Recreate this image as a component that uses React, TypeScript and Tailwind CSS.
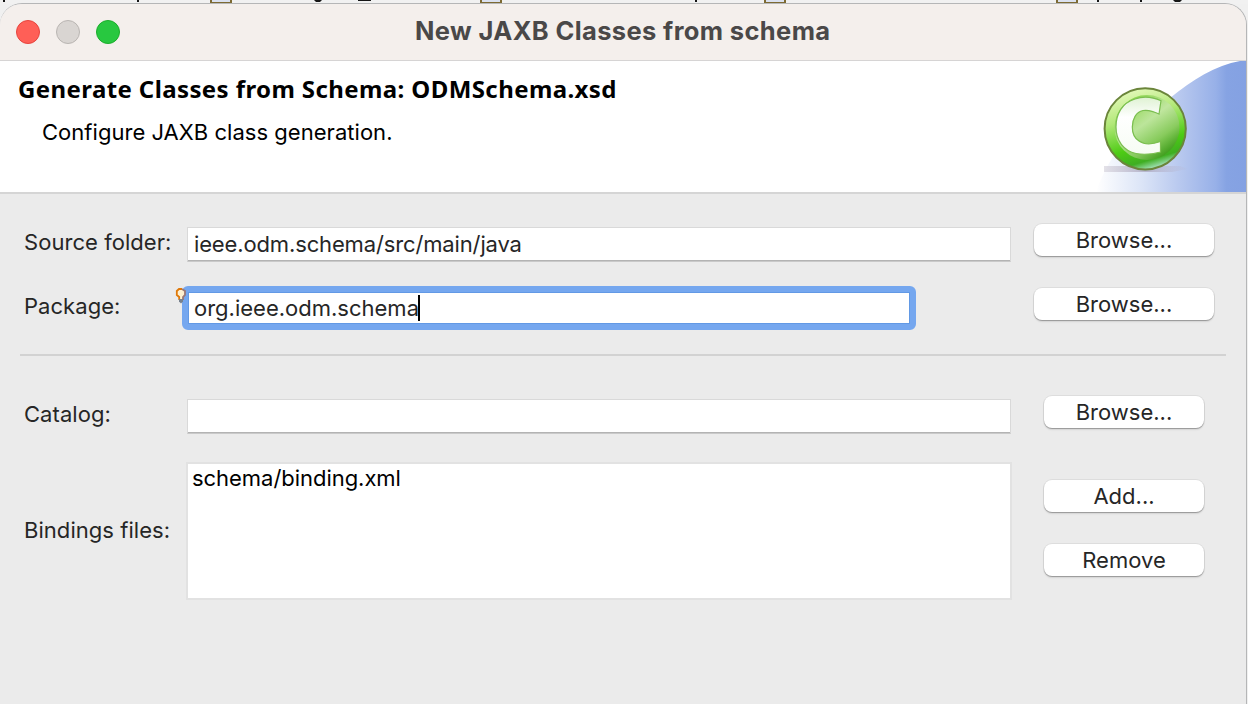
import type { ReactNode } from "react";

function DialogButton({ children, wide = false }: { children: ReactNode; wide?: boolean }) {
  return (
    <button
      className={`${wide ? "w-[180px]" : "w-[160px]"} flex h-8 shrink-0 items-center justify-center rounded-[8px] bg-white text-[22px] leading-none text-[#262626] shadow-[0_0_0_1px_rgba(0,0,0,0.06),0_1px_1px_rgba(0,0,0,0.26),0_2px_2px_rgba(0,0,0,0.08)]`}
    >
      {children}
    </button>
  );
}

function Label({ children }: { children: ReactNode }) {
  return (
    <div className="w-[163px] shrink-0 whitespace-nowrap pt-[2px] text-[22px] leading-8 tracking-[0.05px] text-[#262626]">
      {children}
    </div>
  );
}

function Field({ children }: { children?: ReactNode }) {
  return (
    <div className="flex h-[35px] w-[824px] shrink-0 items-center border border-[#d9d9d9] border-b-[#c9c9c9] bg-white pb-[2px] pl-[6px] text-[22px] leading-none text-[#262626] shadow-[inset_0_-1px_0_#b3b3b3]">
      {children}
    </div>
  );
}

function WizardBanner() {
  return (
    <svg className="h-[131px] w-[152px] shrink-0" viewBox="0 0 152 131">
      <defs>
        <linearGradient id="sweep" x1="0" x2="1" y1="0" y2="0">
          <stop offset="0" stopColor="#ffffff" />
          <stop offset="0.3" stopColor="#dce5f7" />
          <stop offset="0.58" stopColor="#b5c6ee" />
          <stop offset="0.8" stopColor="#97b0e8" />
          <stop offset="0.87" stopColor="#86a3e3" />
          <stop offset="1" stopColor="#84a1e2" />
        </linearGradient>
        <linearGradient id="ball" x1="0.3" x2="0.6" y1="0" y2="1">
          <stop offset="0" stopColor="#e6f9bd" />
          <stop offset="0.35" stopColor="#b2e878" />
          <stop offset="0.7" stopColor="#4dcb14" />
          <stop offset="0.88" stopColor="#3fae22" />
          <stop offset="1" stopColor="#b0e8cd" />
        </linearGradient>
        <linearGradient id="disc" x1="0.2" x2="0.85" y1="0.1" y2="0.95">
          <stop offset="0" stopColor="#7dcf3c" />
          <stop offset="0.4" stopColor="#c3e6a6" />
          <stop offset="0.7" stopColor="#8fca66" />
          <stop offset="1" stopColor="#2e8f0c" />
        </linearGradient>
        <linearGradient id="letter" x1="0" x2="0" y1="0" y2="1">
          <stop offset="0" stopColor="#dff2d3" />
          <stop offset="0.35" stopColor="#ffffff" />
          <stop offset="1" stopColor="#f6fcf3" />
        </linearGradient>
        <linearGradient id="shade" x1="0" x2="1" y1="0" y2="0">
          <stop offset="0" stopColor="#d8d5de" stopOpacity="0.7" />
          <stop offset="0.5" stopColor="#aaa5bd" stopOpacity="0.75" />
          <stop offset="1" stopColor="#b7b4cc" stopOpacity="0.1" />
        </linearGradient>
      </defs>
      <path d="M2 131 C16 92 42 60 76 37 C98 19 122 4 146 0 H152 V131 Z" fill="url(#sweep)" />
      <path d="M10 105 H86 L94 108 L78 111 H10 Z" fill="url(#shade)" />
      <circle cx="51.2" cy="67.8" r="40.6" fill="url(#ball)" stroke="#6b853b" strokeWidth="2" />
      <circle cx="53" cy="66.5" r="32.5" fill="url(#disc)" opacity="0.85" />
      <path
        d="M67 39.7 C59 36 49 35 41 38 C28 42 22 53 22 66 C22 80 30 90 42 92.5 C50 94 59 93 66.5 91 V80.5 C58 83.5 50 83.5 45 80 C40 77 38.3 72 38.3 66 C38.3 58 42 51 49 49.5 C55 48.5 60 50.5 65 53 Z"
        fill="url(#letter)"
        stroke="#7bbe50"
        strokeWidth="1.2"
      />
    </svg>
  );
}

function Bulb() {
  return (
    <svg className="absolute left-[-7px] top-[1px] h-[18px] w-[12px]" viewBox="0 0 12 18">
      <path d="M4 10 L1.8 8 V4 L4 2 H8 L10 4 V8 L8 10 V13 H4 Z" fill="#fff0cf" />
      <path d="M4.2 13 V10 L1.8 8 V4 L4 2 H7" fill="none" stroke="#df7809" strokeWidth="1.8" />
      <path d="M7 2 L10 4 V8 L8 10 V13" fill="none" stroke="#9b7775" strokeWidth="1.8" />
      <path d="M4 12 H8 V14.5 L6 16.5 L4 14.5 Z" fill="#77818d" />
    </svg>
  );
}

function BackgroundStrip() {
  return (
    <svg className="absolute left-0 top-0 h-[4px] w-[1248px]" viewBox="0 0 1248 4">
      <rect width="1248" height="4" fill="#f1f1f1" />
      <g fill="#dbe1ef" stroke="#7d6a33" strokeWidth="2">
        <path d="M211 -1 V3 H231 V-1" />
        <path d="M481 -1 V3 H501 V-1" />
        <path d="M765 -1 V3 H785 V-1" />
        <path d="M1057 -1 V3 H1077 V-1" />
      </g>
      <path d="M3 0h2v2H3z M137 0h2v2h-2z M314 0h8l-2 2h-4z M358 0h13v1h-13z M695 0h2v2h-2z M1097 0h2v2h-2z M1140 0h2v2h-2z M1173 0h9l-2 2h-5z" fill="#151515" />
    </svg>
  );
}

export default function App() {
  return (
    <div className="relative h-[704px] w-[1248px] overflow-hidden bg-[#f0f0f0] pt-[3px] font-['Inter',sans-serif]">
      <BackgroundStrip />
      <main className="relative flex h-[701px] w-[1247px] flex-col overflow-hidden rounded-t-[22px] border-r border-t border-[#b5b6b7] bg-[#ebebeb]">
        <header className="flex h-[57px] shrink-0 items-center border-b border-[#d6d4d4] bg-[#f4efec] pl-4">
          <div className="flex w-[399px] gap-4">
            <span className="h-6 w-6 rounded-full border border-[#e6443e] bg-[#ff5f57]" />
            <span className="h-6 w-6 rounded-full border border-[#b9b5b2] bg-[#d9d5d2]" />
            <span className="h-6 w-6 rounded-full border border-[#1cad2c] bg-[#28c840]" />
          </div>
          <h1 className="whitespace-nowrap pb-[2px] text-[25.5px] font-bold leading-8 tracking-[0.37px] text-[#4a4848]">New JAXB Classes from schema</h1>
        </header>
        <section className="flex h-[133px] shrink-0 justify-between border-b-2 border-[#d5d5d5] bg-white pl-[18px]">
          <div className="pt-[12px]">
            <h2 className="whitespace-nowrap font-['Noto_Sans',sans-serif] text-[24px] font-bold leading-8 tracking-[0.4px] text-black">Generate Classes from Schema: ODMSchema.xsd</h2>
            <p className="mt-[11px] whitespace-nowrap pl-6 text-[22px] leading-8 tracking-[0.03px] text-black">Configure JAXB class generation.</p>
          </div>
          <WizardBanner />
        </section>
        <section className="flex flex-col pl-6 pt-[30px]">
          <div className="flex h-16 items-start">
            <Label>Source folder:</Label>
            <div className="pt-[3px]"><Field><span className="tracking-[-0.14px]">ieee.odm.schema/src/main/java</span></Field></div>
            <div className="ml-[23px]"><DialogButton wide>Browse...</DialogButton></div>
          </div>
          <div className="flex h-[66px] items-start">
            <Label>Package:</Label>
            <div className="relative -ml-[5px] -mt-[2px] flex h-[44px] w-[734px] items-center rounded-[6px] border-[6px] border-[#75a7ef] bg-white pl-[6px] text-[22px] leading-none text-[#262626] shadow-[inset_0_0_0_1px_#6299e5]">
              <span>org.ieee.odm.schema</span>
              <span className="-ml-px h-[26px] w-[2px] bg-black" />
              <div className="absolute -left-[6px] -top-[6px]"><Bulb /></div>
            </div>
            <div className="ml-[118px]"><DialogButton wide>Browse...</DialogButton></div>
          </div>
          <div className="-ml-1 h-[2px] w-[1206px] bg-[#d2d2d2]" />
          <div className="mt-10 flex h-[66px] items-start">
            <Label>Catalog:</Label>
            <div className="pt-[3px]"><Field /></div>
            <div className="ml-[33px]"><DialogButton>Browse...</DialogButton></div>
          </div>
          <div className="flex h-[138px] items-start">
            <div className="pt-[50px]"><Label>Bindings files:</Label></div>
            <div className="-ml-px h-[138px] w-[826px] shrink-0 border-2 border-[#e2e2e2] bg-white pl-[4px] text-[22px] leading-7 tracking-[-0.04px] text-black">schema/binding.xml</div>
            <div className="ml-8 flex h-[138px] flex-col gap-8 pt-[18px]">
              <DialogButton>Add...</DialogButton>
              <DialogButton>Remove</DialogButton>
            </div>
          </div>
        </section>
      </main>
    </div>
  );
}
